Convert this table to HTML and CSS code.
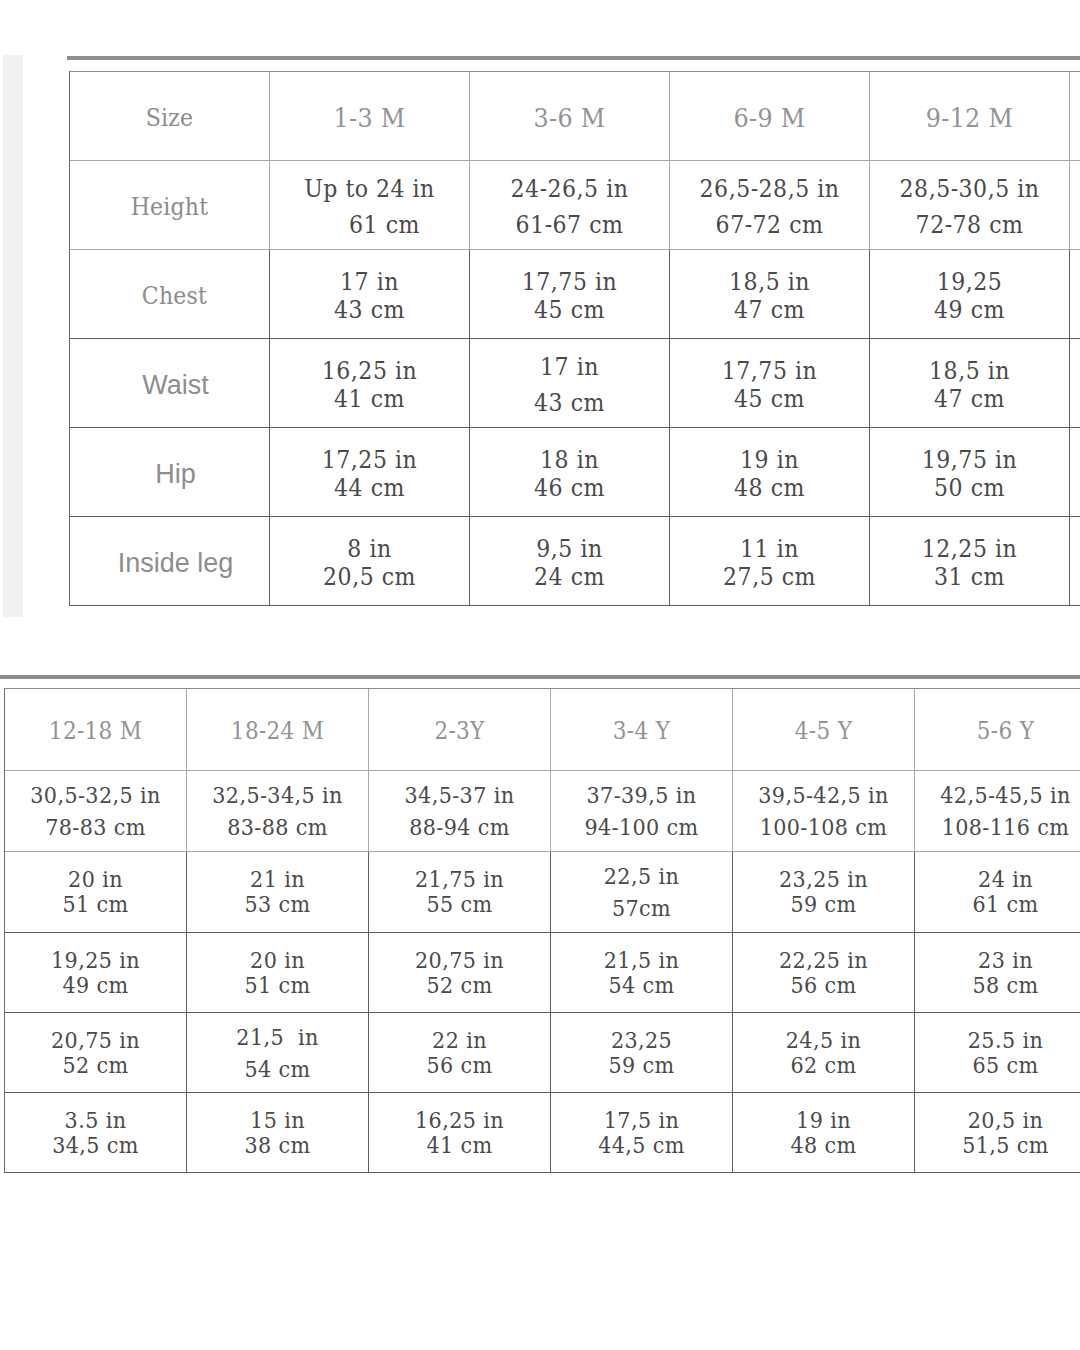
FILE: index.html
```html
<!DOCTYPE html>
<html lang="en">
<head>
<meta charset="utf-8">
<title>Size chart</title>
<link rel="stylesheet" href="styles.css">
</head>
<body>
<section class="panel-top">
  <div class="strip"></div>
  <div class="chart chart-top">
    <div class="rule"></div>
    <table class="sizes sizes-top">
      <tr class="light head">
        <td class="label">Size</td><td>1-3 M</td><td>3-6 M</td><td>6-9 M</td><td>9-12 M</td><td></td>
      </tr>
      <tr class="light loose">
        <td class="label">Height</td>
        <td><div>Up to 24 in</div><div class="nudge">61 cm</div></td>
        <td><div>24-26,5 in</div><div>61-67 cm</div></td>
        <td><div>26,5-28,5 in</div><div>67-72 cm</div></td>
        <td><div>28,5-30,5 in</div><div>72-78 cm</div></td>
        <td></td>
      </tr>
      <tr>
        <td class="label shift">Chest</td>
        <td><div>17 in</div><div>43 cm</div></td>
        <td><div>17,75 in</div><div>45 cm</div></td>
        <td><div>18,5 in</div><div>47 cm</div></td>
        <td><div>19,25</div><div>49 cm</div></td>
        <td></td>
      </tr>
      <tr>
        <td class="label sans">Waist</td>
        <td><div>16,25 in</div><div>41 cm</div></td>
        <td class="loose"><div>17 in</div><div>43 cm</div></td>
        <td><div>17,75 in</div><div>45 cm</div></td>
        <td><div>18,5 in</div><div>47 cm</div></td>
        <td></td>
      </tr>
      <tr>
        <td class="label sans">Hip</td>
        <td><div>17,25 in</div><div>44 cm</div></td>
        <td><div>18 in</div><div>46 cm</div></td>
        <td><div>19 in</div><div>48 cm</div></td>
        <td><div>19,75 in</div><div>50 cm</div></td>
        <td></td>
      </tr>
      <tr>
        <td class="label sans">Inside leg</td>
        <td><div>8 in</div><div>20,5 cm</div></td>
        <td><div>9,5 in</div><div>24 cm</div></td>
        <td><div>11 in</div><div>27,5 cm</div></td>
        <td><div>12,25 in</div><div>31 cm</div></td>
        <td></td>
      </tr>
    </table>
  </div>
</section>

<section class="panel-bottom">
  <div class="rule"></div>
  <table class="sizes sizes-bottom">
    <tr class="light head">
      <td>12-18 M</td><td>18-24 M</td><td>2-3Y</td><td>3-4 Y</td><td>4-5 Y</td><td>5-6 Y</td>
    </tr>
    <tr class="light loose tall">
      <td><div>30,5-32,5 in</div><div>78-83 cm</div></td>
      <td><div>32,5-34,5 in</div><div>83-88 cm</div></td>
      <td><div>34,5-37 in</div><div>88-94 cm</div></td>
      <td><div>37-39,5 in</div><div>94-100 cm</div></td>
      <td><div>39,5-42,5 in</div><div>100-108 cm</div></td>
      <td><div>42,5-45,5 in</div><div>108-116 cm</div></td>
    </tr>
    <tr class="tall">
      <td><div>20 in</div><div>51 cm</div></td>
      <td><div>21 in</div><div>53 cm</div></td>
      <td><div>21,75 in</div><div>55 cm</div></td>
      <td class="loose"><div>22,5 in</div><div>57cm</div></td>
      <td><div>23,25 in</div><div>59 cm</div></td>
      <td><div>24 in</div><div>61 cm</div></td>
    </tr>
    <tr>
      <td><div>19,25 in</div><div>49 cm</div></td>
      <td><div>20 in</div><div>51 cm</div></td>
      <td><div>20,75 in</div><div>52 cm</div></td>
      <td><div>21,5 in</div><div>54 cm</div></td>
      <td><div>22,25 in</div><div>56 cm</div></td>
      <td><div>23 in</div><div>58 cm</div></td>
    </tr>
    <tr>
      <td><div>20,75 in</div><div>52 cm</div></td>
      <td class="loose"><div>21,5&nbsp; in</div><div>54 cm</div></td>
      <td><div>22 in</div><div>56 cm</div></td>
      <td><div>23,25</div><div>59 cm</div></td>
      <td><div>24,5 in</div><div>62 cm</div></td>
      <td><div>25.5 in</div><div>65 cm</div></td>
    </tr>
    <tr>
      <td><div>3.5 in</div><div>34,5 cm</div></td>
      <td><div>15 in</div><div>38 cm</div></td>
      <td><div>16,25 in</div><div>41 cm</div></td>
      <td><div>17,5 in</div><div>44,5 cm</div></td>
      <td><div>19 in</div><div>48 cm</div></td>
      <td><div>20,5 in</div><div>51,5 cm</div></td>
    </tr>
  </table>
</section>
</body>
</html>
```

FILE: styles.css
```css
html, body {
  margin: 0;
  padding: 0;
  background: #ffffff;
  overflow: hidden;
}

body {
  width: 1080px;
  height: 1350px;
  font-family: "DejaVu Serif Condensed", "DejaVu Serif", serif;
  font-stretch: semi-condensed;
  color: #4a4a4a;
}

.panel-top {
  display: flex;
  padding-top: 55px;
}

.strip {
  width: 20px;
  height: 562px;
  margin-left: 3px;
  background: #f1f1f3;
  flex: none;
}

.chart-top {
  margin-left: 44px;
  flex: 1;
  overflow: hidden;
}

.rule {
  height: 4px;
  background: #8f8f8f;
}

.chart-top .rule {
  margin-top: 1px;
}

.sizes {
  border-collapse: separate;
  border-spacing: 0;
  table-layout: fixed;
  border-top: 1px solid #8a8a8a;
  border-left: 1px solid #6a6a6a;
}

.sizes td {
  padding: 0;
  text-align: center;
  vertical-align: middle;
  border-right: 1px solid #5f5f5f;
  border-bottom: 1px solid #5f5f5f;
  white-space: nowrap;
}

.sizes tr.light td {
  border-right-color: #a9a9a9;
  border-bottom-color: #a9a9a9;
}

/* top table */
.sizes-top {
  margin-top: 11px;
  margin-left: 2px;
  width: 1200px;
}

.sizes-top td {
  width: 199px;
  height: 85px;
  padding-top: 3px;
  font-size: 24.5px;
  letter-spacing: 0.5px;
  line-height: 28px;
}

.sizes-top tr.loose td,
.sizes-top td.loose {
  line-height: 36px;
}

.sizes-top .head td {
  color: #939393;
  font-size: 26.5px;
  letter-spacing: 0.3px;
}

.sizes-top td.label,
.sizes-top .head td.label {
  color: #8c8c8c;
  font-size: 24.5px;
  letter-spacing: 0.2px;
}

.sizes-top td.shift {
  padding-left: 10px;
}

.sizes-top td.sans {
  font-family: "Liberation Sans", Arial, sans-serif;
  font-stretch: normal;
  font-size: 27px;
  letter-spacing: 0;
  color: #8e8e8e;
  padding-left: 12px;
}

.nudge {
  padding-left: 30px;
}

/* bottom table */
.panel-bottom {
  margin-top: 58px;
}

.sizes-bottom {
  margin-top: 9px;
  margin-left: 4px;
  width: 1092px;
}

.sizes-bottom td {
  width: 181px;
  height: 79px;
  font-size: 23px;
  letter-spacing: 0.4px;
  line-height: 25px;
}

.sizes-bottom tr.tall td {
  height: 80px;
}

.sizes-bottom tr.head td {
  height: 78px;
  padding-top: 3px;
  font-size: 24px;
  letter-spacing: 0.3px;
  color: #939393;
}

.sizes-bottom tr.loose td,
.sizes-bottom td.loose {
  line-height: 32px;
}
```
